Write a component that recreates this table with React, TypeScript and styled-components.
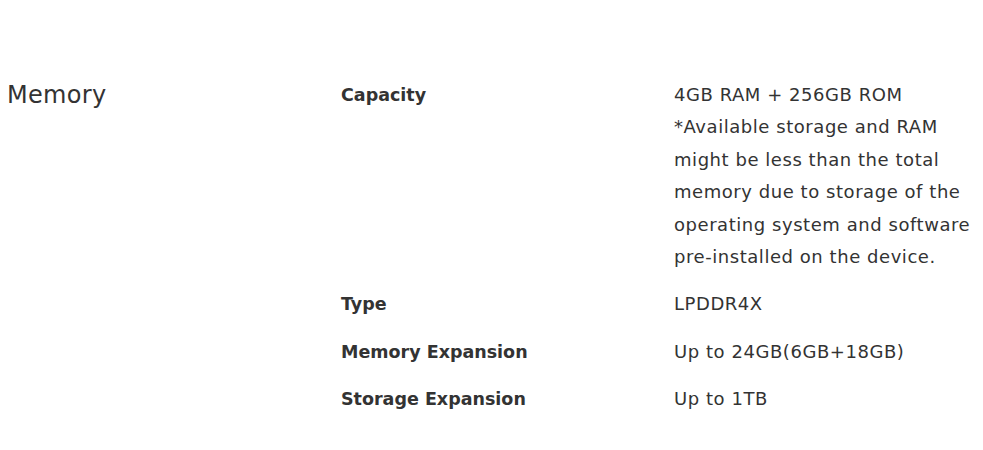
import React from "react";
import styled, { createGlobalStyle } from "styled-components";

const Global = createGlobalStyle`
  html, body { margin: 0; padding: 0; background: #fff; }
  body { font-family: "DejaVu Sans", "Open Sans", sans-serif; color: #333; }
`;

const Section = styled.section`
  display: grid;
  grid-template-columns: 334px 333px 1fr;
  padding: 79px 0 0 7px;
`;

const Heading = styled.h2`
  margin: 0;
  font-size: 24px;
  font-weight: 500;
  letter-spacing: 0.3px;
  line-height: 32px;
  color: #333;
`;

const Specs = styled.dl`
  grid-column: 2 / 4;
  margin: 0;
  display: grid;
  grid-template-columns: 333px 1fr;
  row-gap: 15px;
`;

const Label = styled.dt`
  margin: 0;
  font-size: 17.5px;
  font-weight: 700;
  line-height: 32.4px;
  color: #333;
`;

const Value = styled.dd`
  margin: 0;
  font-size: 18px;
  font-weight: 400;
  letter-spacing: 0.55px;
  line-height: 32.4px;
  color: #333;
`;

const Line = styled.span`
  display: block;
  white-space: nowrap;
`;

const rows: [string, string[]][] = [
  [
    "Capacity",
    [
      "4GB RAM + 256GB ROM",
      "*Available storage and RAM",
      "might be less than the total",
      "memory due to storage of the",
      "operating system and software",
      "pre-installed on the device.",
    ],
  ],
  ["Type", ["LPDDR4X"]],
  ["Memory Expansion", ["Up to 24GB(6GB+18GB)"]],
  ["Storage Expansion", ["Up to 1TB"]],
];

export default function App() {
  return (
    <>
      <Global />
      <Section>
        <Heading>Memory</Heading>
        <Specs>
          {rows.map(([k, lines]) => (
            <React.Fragment key={k}>
              <Label>{k}</Label>
              <Value>
                {lines.map((line, i) => (
                  <Line key={i}>{line}</Line>
                ))}
              </Value>
            </React.Fragment>
          ))}
        </Specs>
      </Section>
    </>
  );
}
